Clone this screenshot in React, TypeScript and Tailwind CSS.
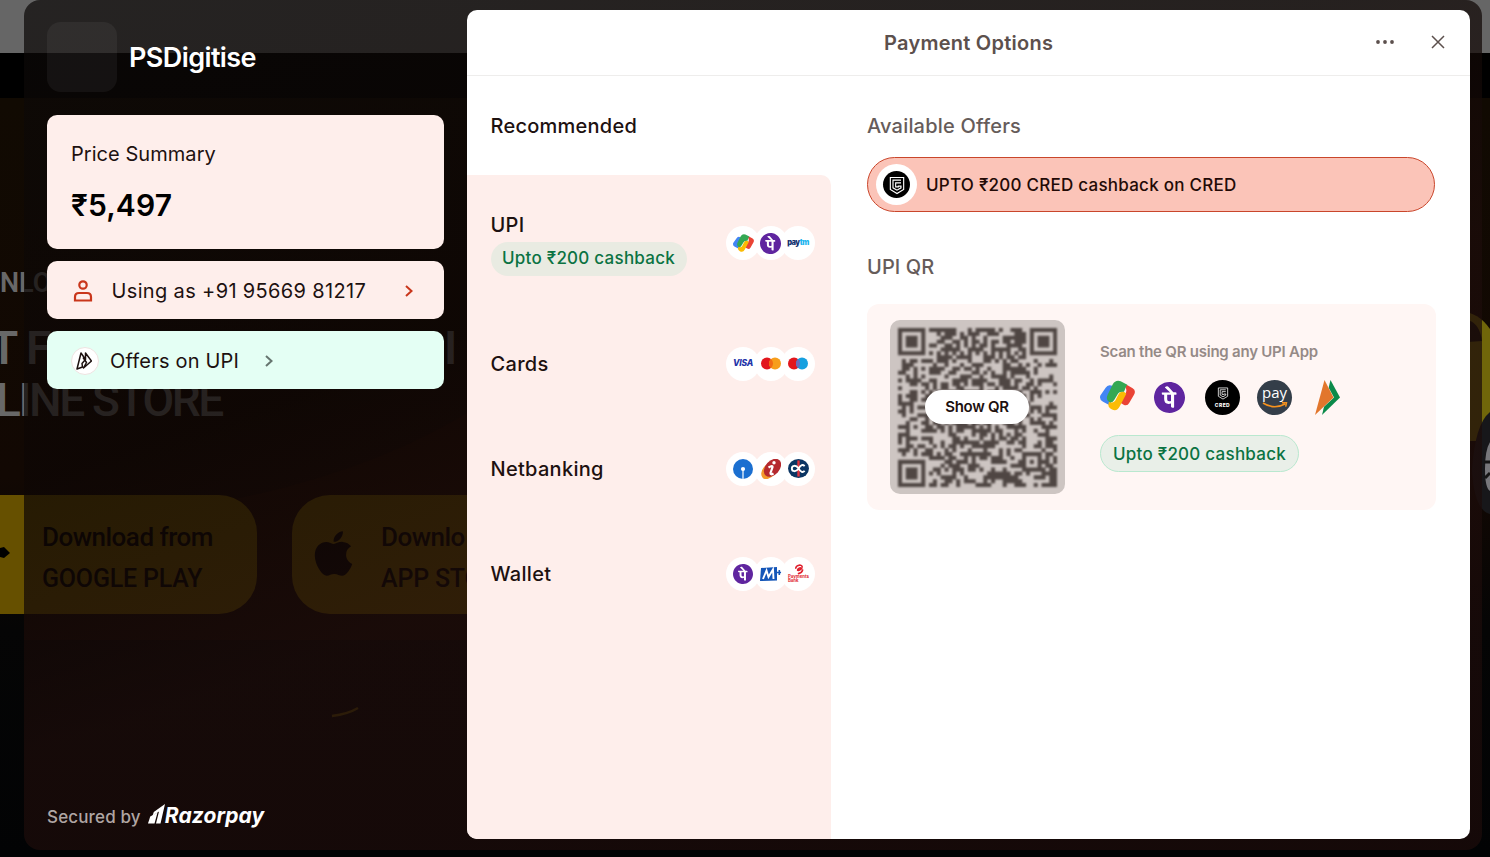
import type { ReactNode } from 'react';
import { FaApple } from 'react-icons/fa';
import { SiPhonepe } from 'react-icons/si';

const QR_SIZE = 41;

function inFinder(x: number, y: number) {
  const far = QR_SIZE - 8;
  return (x < 8 && y < 8) || (x >= far && y < 8) || (x < 8 && y >= far);
}

function ring(x: number, y: number, cx: number, cy: number) {
  return Math.max(Math.abs(x - cx), Math.abs(y - cy));
}

function noise(x: number, y: number) {
  let h = Math.imul(x + 11, 374761393) ^ Math.imul(y + 7, 668265263);
  h = Math.imul(h ^ (h >>> 13), 1274126177);
  h = Math.imul(h ^ (h >>> 15), 2246822519);
  return ((h ^ (h >>> 16)) >>> 0) / 4294967296;
}

function buildQr() {
  const cells: string[] = [];
  for (let y = 0; y < QR_SIZE; y++) {
    for (let x = 0; x < QR_SIZE; x++) {
      let on = noise(x, y) > 0.48;
      if (inFinder(x, y)) {
        const cx = x < 8 ? 3 : QR_SIZE - 4;
        const cy = y < 8 ? 3 : QR_SIZE - 4;
        const r = ring(x, y, cx, cy);
        on = r < 2 || r === 3;
      } else if (ring(x, y, 34, 34) <= 2) {
        on = ring(x, y, 34, 34) !== 1;
      } else if (x === 6 || y === 6) {
        on = (x + y) % 2 === 0;
      }
      if (on) cells.push(`M${x} ${y}h1.04v1.04h-1.04z`);
    }
  }
  return cells.join('');
}

const qrPath = buildQr();

function GPay({ className }: { className: string }) {
  return (
    <svg viewBox="0 0 105 90" className={className}>
      <path fill="#ea4335" d="M80 13 98 23Q109 30 102 43L88 67Q82 78 71 73L60 66 76 40Q84 26 72 16Z" />
      <path fill="#4285f4" d="M17 22Q23 11 34 15L50 22 32 60 36 78 9 64Q-3 57 1 45Z" />
      <path fill="#fbbc04" d="M54 44Q62 30 72 34L79 40 59 78Q51 94 36 87L30 83Q22 76 27 64 40 70 46 60Z" />
      <path fill="#34a853" d="M38 12Q46-3 62 2L82 13Q78 16 76 24L72 34Q57 31 52 43L43 58Q37 69 27 64L23 60Q18 54 23 43Z" />
    </svg>
  );
}

function PhonePe({ className }: { className: string }) {
  return (
    <span className={`block rounded-full bg-white ${className}`}>
      <SiPhonepe className="h-full w-full text-[#5f259f]" />
    </span>
  );
}

function CredShield({ className }: { className: string }) {
  return (
    <svg viewBox="0 0 24 28" fill="none" stroke="#fff" strokeWidth="1.7" className={className}>
      <path d="M2 2h20v18l-10 6-10-6z" />
      <path d="M18 6H6v11.500l6 3.500 6-3.500V15h-4v1H10V10h8" />
    </svg>
  );
}

function Sbi() {
  return (
    <svg viewBox="0 0 20 20" className="size-5">
      <circle cx="10" cy="10" r="10" fill="#1b6fd0" />
      <circle cx="10" cy="10" r="2.100" fill="#fff" />
      <path d="M10 10v10" stroke="#fff" strokeWidth="1.200" />
    </svg>
  );
}

function Icici() {
  return (
    <svg viewBox="0 0 20 20" className="size-5">
      <ellipse cx="8.500" cy="11.500" rx="6.500" ry="10" transform="rotate(42 8.500 11.500)" fill="#f39a2d" />
      <ellipse cx="11.500" cy="8.800" rx="7" ry="10.300" transform="rotate(42 11.500 8.800)" fill="#b5292e" />
      <circle cx="13" cy="3.800" r="1.700" fill="#fff" />
      <path d="M7.500 8.500q4.500-2.500 4-.2L9.500 14q-.3 2.300 3 .5" fill="none" stroke="#fff" strokeWidth="2.200" />
    </svg>
  );
}

function Kotak() {
  return (
    <svg viewBox="0 0 22 20" className="h-[19px] w-[21px]">
      <ellipse cx="11" cy="10" rx="11" ry="10" fill="#0b3563" />
      <path d="M11 1.500v17" stroke="#e2323c" strokeWidth="2.500" />
      <path d="M17.500 7.500c-2-2-4-1.500-6.500 2.500s-7 3.500-7 0 4.500-4 7 0 4.500 4.500 6.500 2.500" fill="none" stroke="#fff" strokeWidth="2" />
    </svg>
  );
}

function Mobikwik() {
  return (
    <svg viewBox="0 0 22 16" className="h-4 w-[22px]">
      <path d="M1 2 17 1v13.500L0 15z" fill="#1456b8" />
      <path d="M3 13 6.500 4.500 8.500 11 13 3.500 13.500 13" fill="none" stroke="#fff" strokeWidth="1.900" />
      <path d="M17 6.500h4.500M19.300 4v5" stroke="#1456b8" strokeWidth="1.600" />
    </svg>
  );
}

function AirtelBank() {
  return (
    <span className="flex flex-col items-center font-bold text-[4.300px] leading-[4.500px] text-[#e01f2d]">
      <svg viewBox="0 0 12 12" className="size-[11px]">
        <path d="M3 4.500C3.500 1 9.500 0 10 3c.4 2.500-5 5-5 3.500S7.500 4 8 4M6 10.500C8 10 10 8.500 10.500 6.500" fill="none" stroke="#e01f2d" strokeWidth="1.700" strokeLinecap="round" />
      </svg>
      <span className="w-5">Payments Bank</span>
    </span>
  );
}

function CardPair({ left, right, mid }: { left: string; right: string; mid: string }) {
  return (
    <svg viewBox="0 0 20 12" className="h-[13px] w-5">
      <circle cx="6" cy="6" r="6" fill={left} />
      <circle cx="14" cy="6" r="6" fill={right} />
      <path d="M10 1.500a6 6 0 0 1 0 9 6 6 0 0 1 0-9" fill={mid} />
    </svg>
  );
}

interface Method {
  name: string;
  offer?: string;
  icons: ReactNode[];
}

const methods: Method[] = [
  {
    name: 'UPI',
    offer: 'Upto ₹200 cashback',
    icons: [
      <GPay className="h-[18px] w-[21px]" />,
      <PhonePe className="size-[21px]" />,
      <span className="text-[7.500px] font-black tracking-[-0.5px] text-[#12306e]">
        pay<span className="text-[#1bb4ee]">tm</span>
      </span>,
    ],
  },
  {
    name: 'Cards',
    icons: [
      <span className="text-[8.500px] font-extrabold italic tracking-[-0.2px] text-[#2233a8]">VISA</span>,
      <CardPair left="#e2161d" right="#f79e1b" mid="#f26a14" />,
      <CardPair left="#e2161d" right="#16a0e0" mid="#6c6bbd" />,
    ],
  },
  { name: 'Netbanking', icons: [<Sbi />, <Icici />, <Kotak />] },
  { name: 'Wallet', icons: [<PhonePe className="size-5" />, <Mobikwik />, <AirtelBank />] },
];

function MethodRow({ method }: { method: Method }) {
  return (
    <div className={`flex items-center justify-between pr-4 pl-[23.500px] ${method.offer ? 'h-[136px]' : 'h-[105px]'}`}>
      <div className={method.offer ? 'pt-0.5' : ''}>
        <div className="text-[20px] leading-6 font-medium tracking-[0.3px] text-[#1d1110]">{method.name}</div>
        {method.offer && (
          <div className="mt-[5px] flex h-[34px] w-[196px] items-center justify-center rounded-full bg-[#e9ebe2] pt-px text-[17px] font-medium tracking-[0.25px] text-[#0b7343]">
            {method.offer}
          </div>
        )}
      </div>
      <div className="flex">
        {method.icons.map((icon, i) => (
          <div key={i} className="-ml-[6.500px] flex size-[34px] items-center justify-center rounded-full bg-white">
            {icon}
          </div>
        ))}
      </div>
    </div>
  );
}

// Dimmed store page that shows through the checkout
function StorePage() {
  return (
    <div className="absolute inset-0 overflow-hidden font-[Roboto,sans-serif]">
      <div className="h-[53px] bg-[#666]" />
      <div className="h-[45px] bg-black" />
      <div className="h-[759px] bg-[linear-gradient(180deg,#110a02_0%,#120803_50%,#050505_70%,#020304_100%)]" />
      <svg viewBox="0 0 1490 857" className="absolute inset-0 h-full w-full">
        <path d="M230 500Q380 470 480 405V640H24V500Z" fill="#2a0d02" opacity="0.35" />
        <path d="M332 716q16-2 26-8" stroke="#5a4a05" strokeWidth="2.500" fill="none" />
        <path d="M1462 312q16 0 28 17v100l-8 12h-20z" fill="#70660a" />
        <path d="M1468 320q12 4 14 21l-14 1z" fill="#15120a" />
        <path d="M1490 412q-15 12-18 58 2 40 18 44z" fill="#17171a" />
        <path d="M1490 442q-5 8-5 27t5 22z" fill="#77777b" />
        <path d="M1484 462h6M1485 478l5-5" stroke="#151515" strokeWidth="3" />
      </svg>
      <div className="absolute top-[265px] left-0 text-[27px] leading-9 font-semibold text-[#686868]">NLOAD</div>
      <div className="absolute top-[320px] -left-[10px] text-[46px] leading-[56px] font-semibold text-[#686868]">T</div>
      <div className="absolute top-[320px] left-[26px] text-[46px] leading-[56px] font-semibold text-[#686868]">FO</div>
      <div className="absolute top-[320px] left-[444px] text-[46px] leading-[56px] font-semibold text-[#686868]">I</div>
      <div className="absolute top-[372px] -left-[4px] text-[46px] leading-[56px] font-medium tracking-[-2.400px] text-[#686868]">
        LINE STORE
      </div>
      <div className="absolute top-[495px] left-0 flex h-[119px] gap-[35px] text-[26px] leading-[42px] font-medium text-black">
        <div className="flex w-[257px] items-center rounded-r-[38px] bg-[#665000]">
          <svg viewBox="0 0 10 14" className="mb-[3px] h-[14px] w-[10px]">
            <path d="M0 2 4 1 10 7 4 12 0 11z" />
          </svg>
          <div className="mt-[6px] ml-8 tracking-[-0.500px] whitespace-nowrap">
            Download from
            <div className="text-[25px] tracking-[-0.2px]">GOOGLE PLAY</div>
          </div>
        </div>
        <div className="flex w-[340px] items-center rounded-[38px] bg-[#665000] pl-[16px]">
          <FaApple className="mb-[3px] size-[51px]" />
          <div className="mt-[6px] ml-[22px] tracking-[-0.500px] whitespace-nowrap">
            Downlo
            <div className="text-[25px] tracking-[-0.2px]">APP STO</div>
          </div>
        </div>
      </div>
    </div>
  );
}

function Sidebar() {
  return (
    <aside className="flex w-[420px] flex-col">
      <div className="mt-[22px] flex items-center gap-3">
        <div className="size-[70px] rounded-[14px] bg-white/5" />
        <h1 className="mt-[3px] text-[27px] font-semibold tracking-[-0.6px] text-white">PSDigitise</h1>
      </div>
      <div className="mt-[23px] h-[134px] w-[397px] rounded-[10px] bg-[#feeeeb] px-6 pt-6 text-[#1d1110]">
        <div className="text-[20px] leading-[30px] tracking-[0.05px]">Price Summary</div>
        <div className="mt-[14px] text-[30px] leading-[44px] font-semibold tracking-[0.1px] text-black">₹5,497</div>
      </div>
      <div className="mt-3 flex h-[58px] w-[397px] items-center rounded-[10px] bg-[#feeeeb] pt-0.5 pl-[26px] text-[20px] tracking-[0.35px] text-[#1d1110]">
        <svg viewBox="0 0 20 22" fill="none" stroke="#c9361b" strokeWidth="2.200" className="h-[22px] w-5">
          <circle cx="10" cy="5" r="3.700" />
          <path d="M2 20.500v-3.500q0-4 4-4h8q4 0 4 4v3.500z" />
        </svg>
        <span className="ml-[18.500px] w-[255px] whitespace-nowrap">Using as +91 95669 81217</span>
        <svg viewBox="0 0 8 12" fill="none" stroke="#c9361b" strokeWidth="2" className="ml-[38px] h-3 w-2">
          <path d="m1 1 5.500 5L1 11" />
        </svg>
      </div>
      <div className="mt-3 flex h-[58px] w-[397px] items-center rounded-[10px] bg-[#e4fff4] pt-0.5 pl-6 text-[20px] tracking-[0.2px] text-[#1d1110]">
        <span className="flex size-7 items-center justify-center rounded-full border border-[#eee3e1] bg-white">
          <svg viewBox="0 0 16 18" fill="none" stroke="#1d1110" strokeWidth="1.500" strokeLinejoin="round" className="mr-[3px] h-[18px] w-4">
            <path d="M5 1 9.500 7.500 6 11.500 6.500 15 1 17zM9.500 7.500V1L15.500 9 7.500 16 10.500 10.500 7 5.500" />
          </svg>
        </span>
        <span className="ml-[11px] w-[129px] whitespace-nowrap">Offers on UPI</span>
        <svg viewBox="0 0 8 12" fill="none" stroke="#66756f" strokeWidth="2" className="ml-[26px] h-3 w-2">
          <path d="m1 1 5.500 5L1 11" />
        </svg>
      </div>
      <div className="mt-auto mb-[20px] flex items-center text-[17px] leading-[26px] font-medium tracking-[0.15px] text-[#b0a6a4]">
        Secured by
        <svg viewBox="0 0 17 20" className="mb-[5px] ml-[7px] h-5 w-[17px]" fill="#fff">
          <path d="M17 0 12.500 19.500H8L11 7.500 4.500 11.800 5.800 8z" />
          <path d="M2.200 12.500 9.500 8.500 6.500 19.500H0z" />
        </svg>
        <span className="mb-px text-[21px] font-bold tracking-[0.1px] text-white italic">Razorpay</span>
      </div>
    </aside>
  );
}

function QrCode() {
  return (
    <div className="relative h-[174px] w-[175px] overflow-hidden rounded-[10px] bg-[#cdc5c2]">
      <svg viewBox="0 0 41 41" className="m-2 size-[159px] fill-[#4f4643] blur-[1px]">
        <path d={qrPath} />
      </svg>
      <div className="absolute top-[70px] left-[35px] flex h-[34px] w-[104px] items-center justify-center rounded-full bg-white text-[15px] font-semibold tracking-[-0.3px] text-[#1d1110]">
        Show QR
      </div>
    </div>
  );
}

function UpiApps() {
  return (
    <div className="mt-[15px] flex h-[36px] items-center">
      <GPay className="mb-1 h-[31px] w-[35px]" />
      <PhonePe className="ml-[19px] size-[31px]" />
      <div className="ml-[20px] flex size-[35px] flex-col items-center justify-center rounded-full bg-black">
        <CredShield className="h-[13px] w-3" />
        <span className="mt-0.5 text-[5px] leading-[6px] font-extrabold tracking-[0.4px] text-white">CRED</span>
      </div>
      <div className="ml-[17px] flex size-[35px] flex-col items-center rounded-full bg-[#343e49]">
        <span className="mt-[3px] font-['Open_Sans',sans-serif] text-[15px] leading-[18px] text-white">pay</span>
        <svg viewBox="0 0 26 7" fill="none" stroke="#f5921e" strokeWidth="1.500" className="mt-px h-[7px] w-[26px]">
          <path d="M1 1q11 7 22 1M20 .8l4.500-.2-.8 4" />
        </svg>
      </div>
      <svg viewBox="0 0 25 35" className="ml-[23px] h-[35px] w-[25px]">
        <path d="M15.500 0 25 17.500 7 35z" fill="#0b8a4a" />
        <path d="M9.500 0 19 17.500 0 35z" fill="#fff6f4" />
        <path d="M9.500 0 18.500 17.500 0 35z" fill="#e2762c" />
      </svg>
    </div>
  );
}

export default function App() {
  return (
    <div className="relative h-[857px] w-[1490px] overflow-hidden bg-black font-[Inter,sans-serif]">
      <StorePage />
      <div className="relative ml-6 flex h-[850px] w-[1458px] rounded-2xl bg-[linear-gradient(160deg,rgba(12,9,8,0.72)_0%,rgba(13,6,4,0.72)_35%,rgba(28,12,10,0.74)_55%,rgba(28,11,10,0.74)_100%)] pl-[23px]">
        <Sidebar />
        <main className="mt-[10px] flex h-[829px] w-[1003px] flex-col overflow-hidden rounded-[10px] bg-white">
          <header className="flex h-[66px] shrink-0 items-center border-b border-[#eeedec]">
            <h2 className="ml-[417px] w-[170px] text-[20px] font-semibold tracking-[0.25px] whitespace-nowrap text-[#5c504d]">Payment Options</h2>
            <svg viewBox="0 0 18 4" fill="#5c504d" className="mb-px ml-[322px] h-1 w-[18px]">
              <circle cx="2" cy="2" r="1.900" />
              <circle cx="9" cy="2" r="1.900" />
              <circle cx="16" cy="2" r="1.900" />
            </svg>
            <svg viewBox="0 0 14 14" stroke="#5c504d" strokeWidth="1.500" className="mb-px ml-[37px] size-[14px]">
              <path d="m1 1 12 12M13 1 1 13" />
            </svg>
          </header>
          <div className="flex flex-1">
            <section className="flex w-[364px] flex-col">
              <h3 className="h-[99px] pt-[35px] pl-[23.500px] text-[20px] leading-[30px] font-medium tracking-[0.25px] text-[#1d1110]">Recommended</h3>
              <div className="flex-1 rounded-tr-[10px] bg-[#feeeeb]">
                {methods.map((method) => (
                  <MethodRow key={method.name} method={method} />
                ))}
              </div>
            </section>
            <section className="pt-[35px] pl-9">
              <h3 className="text-[20px] leading-[30px] font-medium tracking-[0.2px] text-[#665c5a]">Available Offers</h3>
              <div className="mt-4 flex h-[55px] w-[568px] items-center rounded-full border border-[#c9462b] bg-[#fbc4b8] pl-2">
                <div className="flex size-[41px] items-center justify-center rounded-full bg-white">
                  <div className="flex size-[27px] items-center justify-center rounded-full bg-black">
                    <CredShield className="mt-px h-[19px] w-4" />
                  </div>
                </div>
                <span className="mt-0.5 ml-[9px] text-[17px] font-medium tracking-[0.25px] text-[#230a06]">UPTO ₹200 CRED cashback on CRED</span>
              </div>
              <h3 className="mt-10 text-[20px] leading-[30px] font-medium tracking-[0.1px] text-[#665c5a]">UPI QR</h3>
              <div className="mt-[22px] flex h-[206px] w-[569px] items-start rounded-xl bg-[#fff6f4] pt-4 pl-[23px]">
                <QrCode />
                <div className="pt-5 pl-[35px]">
                  <div className="text-[15px] leading-6 font-semibold tracking-[-0.23px] whitespace-nowrap text-[#958a87]">Scan the QR using any UPI App</div>
                  <UpiApps />
                  <div className="mt-5 flex h-[37px] w-[199px] items-center justify-center rounded-full border border-[#b9e8cf] bg-[#e9efe8] pt-0.5 text-[17px] font-medium tracking-[0.25px] text-[#0b7343]">
                    Upto ₹200 cashback
                  </div>
                </div>
              </div>
            </section>
          </div>
        </main>
      </div>
    </div>
  );
}
